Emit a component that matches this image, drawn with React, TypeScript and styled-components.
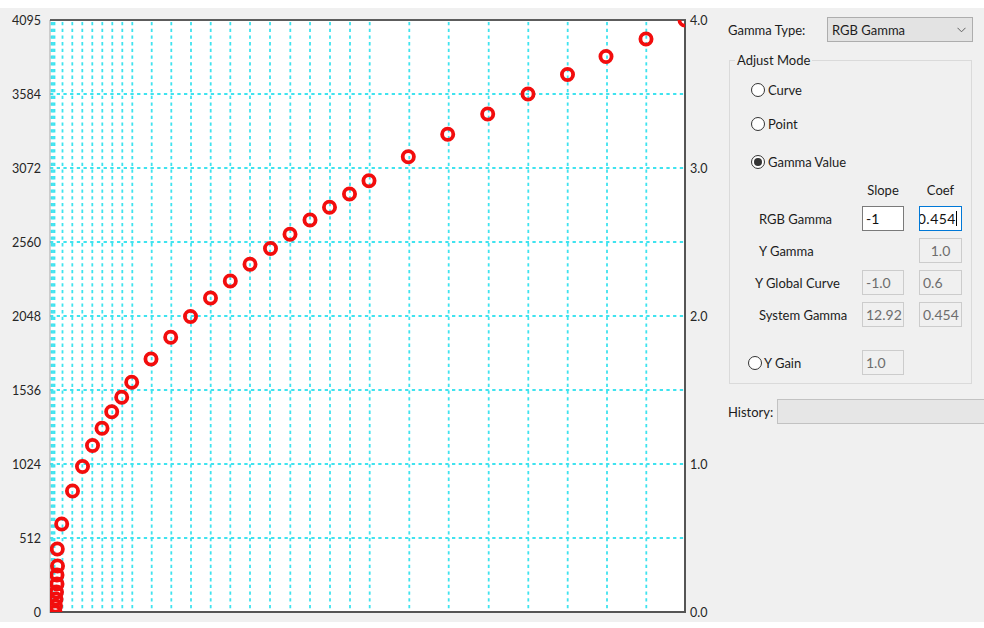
import React from "react";
import styled, { createGlobalStyle, css } from "styled-components";

const GlobalStyle = createGlobalStyle`
  html, body { margin: 0; padding: 0; background: #ffffff; }
  body {
    font-family: "Lato", "Open Sans", sans-serif;
    font-size: 13px;
    color: #1c1c1c;
  }
`;

/* ---------- window ---------- */

const Window = styled.div`
  margin-top: 8px;
  width: 984px;
  height: 614px;
  background: #f0f0f0;
  display: flex;
  overflow: hidden;
`;

const Chart = styled.svg`
  flex: 0 0 720px;
  height: 614px;
  display: block;
`;

const Side = styled.div`
  flex: 1;
  min-width: 0;
  padding: 9px 0 0 8px;
  display: flex;
  flex-direction: column;
`;

/* ---------- gamma type ---------- */

const TypeRow = styled.div`
  display: flex;
  align-items: center;
  height: 25px;
`;

const TypeLabel = styled.span`
  flex: 0 0 99px;
`;

const Combo = styled.div`
  box-sizing: border-box;
  flex: 0 0 146px;
  height: 25px;
  border: 1px solid #adadad;
  background: #e3e3e3;
  display: flex;
  align-items: center;
  justify-content: space-between;
  padding: 0 6px 0 4px;
`;

/* ---------- group box ---------- */

const Group = styled.fieldset`
  box-sizing: border-box;
  margin: 10px 0 0 1px;
  padding: 0 0 8px 0;
  width: 243px;
  min-width: 0;
  border: 1px solid #dadada;
  display: flex;
  flex-direction: column;
`;

const Legend = styled.legend`
  margin-left: 5px;
  padding: 0 2px;
  line-height: 16px;
`;

const RadioRow = styled.div<{ $top: number; $indent: number }>`
  display: flex;
  align-items: center;
  gap: 3px;
  height: 20px;
  margin-top: ${(p) => p.$top}px;
  margin-left: ${(p) => p.$indent}px;
`;

const RadioMark = styled.span<{ $on?: boolean }>`
  box-sizing: border-box;
  width: 14px;
  height: 14px;
  border-radius: 50%;
  border: 1px solid #333333;
  background: #ffffff;
  display: flex;
  align-items: center;
  justify-content: center;
  flex: 0 0 auto;
  &::after {
    content: "";
    width: 8px;
    height: 8px;
    border-radius: 50%;
    background: #333333;
    display: ${(p) => (p.$on ? "block" : "none")};
  }
`;

const Table = styled.div`
  display: grid;
  grid-template-columns: 88px 42px 43px;
  grid-template-rows: 18px repeat(4, 25px);
  column-gap: 15px;
  row-gap: 7px;
  margin: 9px 0 0 29px;
`;

const HeadCell = styled.span`
  text-align: center;
  line-height: 18px;
`;

const RowLabel = styled.span<{ $shift?: number }>`
  display: flex;
  align-items: center;
  white-space: nowrap;
  margin-left: ${(p) => p.$shift ?? 0}px;
`;

type FieldKind = "normal" | "focus" | "disabled";

const Field = styled.div<{ $kind: FieldKind; $align?: "left" | "center" }>`
  box-sizing: border-box;
  height: 25px;
  border: 1px solid #7a7a7a;
  background: #ffffff;
  padding: 0 3px;
  display: flex;
  align-items: center;
  justify-content: ${(p) => (p.$align === "center" ? "center" : "flex-start")};
  overflow: hidden;
  white-space: nowrap;
  font-size: 14px;
  color: #111111;
  ${(p) =>
    p.$kind === "disabled" &&
    css`
      border-color: #cccccc;
      background: #f0f0f0;
      color: #6d6d6d;
    `}
  ${(p) =>
    p.$kind === "focus" &&
    css`
      border-color: #0078d7;
      justify-content: flex-end;
      padding-right: 4px;
      letter-spacing: 0.5px;
    `}
`;

const Caret = styled.span`
  display: inline-block;
  flex: 0 0 1px;
  height: 15px;
  background: #000000;
`;

const GainRow = styled.div`
  display: flex;
  align-items: center;
  margin: 23px 0 0 18px;
  height: 25px;
`;

const GainChoice = styled.div`
  display: flex;
  align-items: center;
  gap: 2px;
  flex: 0 0 114px;
`;

const GainField = styled(Field)`
  flex: 0 0 42px;
`;

/* ---------- history ---------- */

const HistoryRow = styled.div`
  display: flex;
  align-items: center;
  margin-top: 15px;
  height: 25px;
`;

const HistoryLabel = styled.span`
  flex: 0 0 49px;
`;

const HistoryBox = styled.div`
  box-sizing: border-box;
  flex: 0 0 230px;
  height: 25px;
  border: 1px solid #c2c2c2;
  background: #e6e6e6;
`;

/* ---------- chart data ---------- */

const PLOT = { left: 50, top: 20, right: 685, bottom: 612 };

const gridX = [
  51.5, 53, 54.5, 62.5, 72.3, 82.3, 92.3, 102.3, 112.3, 122.3, 132.3, 151.7,
  171.3, 191, 210.7, 230.3, 250, 270, 290.3, 310, 330, 350, 369.7, 409.3,
  448.7, 488.7, 528.3, 567.7, 607, 646.3,
];

const gridY = [94, 168, 242, 316, 390, 464, 538];

const leftTicks: [string, number][] = [
  ["4095", 20],
  ["3584", 94],
  ["3072", 168],
  ["2560", 242],
  ["2048", 316],
  ["1536", 390],
  ["1024", 464],
  ["512", 538],
  ["0", 612],
];

const rightTicks: [string, number][] = [
  ["4.0", 20],
  ["3.0", 168],
  ["2.0", 316],
  ["1.0", 464],
  ["0.0", 612],
];

const points: [number, number][] = [
  [55, 612], [55.5, 606], [56, 599], [56.5, 592], [57, 584], [57, 575],
  [57.5, 566], [57.3, 549], [61.7, 524], [72.5, 491], [82.5, 466.5],
  [92.5, 445.5], [102, 428.3], [111.7, 411.7], [121.7, 397.3], [131.7, 382.3],
  [151, 359], [170.7, 337.3], [190.5, 316.5], [210.5, 298], [230.3, 281],
  [250, 264.3], [270.5, 248.5], [290, 234.3], [310, 220], [329.5, 207.3],
  [349.5, 194], [369, 180.7], [408.3, 156.7], [447.7, 134.3], [487.7, 114],
  [528, 94], [567.5, 74.5], [606, 56.5], [646, 39], [685, 20],
];

const GammaChart: React.FC = () => (
  <Chart viewBox="0 8 720 614" xmlns="http://www.w3.org/2000/svg">
    <defs>
      <clipPath id="plotClip">
        <rect
          x={PLOT.left}
          y={PLOT.top}
          width={PLOT.right - PLOT.left}
          height={PLOT.bottom - PLOT.top}
        />
      </clipPath>
    </defs>
    <rect
      x={PLOT.left}
      y={PLOT.top}
      width={PLOT.right - PLOT.left}
      height={PLOT.bottom - PLOT.top}
      fill="#ffffff"
    />
    <g stroke="#3fe3ef" strokeWidth={1.8} strokeDasharray="3.3 3.4" clipPath="url(#plotClip)">
      {gridX.map((x) => (
        <line key={`v${x}`} x1={x} y1={PLOT.top + 2} x2={x} y2={PLOT.bottom} />
      ))}
      {gridY.map((y) => (
        <line key={`h${y}`} x1={PLOT.left} y1={y} x2={PLOT.right} y2={y} />
      ))}
    </g>
    <line x1={PLOT.left} y1={PLOT.top} x2={PLOT.left} y2={PLOT.bottom + 1} stroke="#a9a9a9" strokeWidth={1} />
    <line x1={PLOT.left} y1={PLOT.top} x2={PLOT.right + 1} y2={PLOT.top} stroke="#5c5c5c" strokeWidth={2} />
    <line x1={PLOT.right} y1={PLOT.top} x2={PLOT.right} y2={PLOT.bottom + 1} stroke="#555555" strokeWidth={2} />
    <line x1={PLOT.left} y1={PLOT.bottom} x2={PLOT.right + 1} y2={PLOT.bottom} stroke="#555555" strokeWidth={2} />
    <g fill="none" stroke="#f20d0d" strokeWidth={3.8} clipPath="url(#plotClip)">
      {points.map(([x, y], i) => (
        <circle key={i} cx={x} cy={y} r={5.6} />
      ))}
    </g>
    <g fontFamily="Lato, 'Open Sans', sans-serif" fontSize={12.5} fill="#262626">
      {leftTicks.map(([t, y]) => (
        <text key={t} x={41} y={y} textAnchor="end" dominantBaseline="central">
          {t}
        </text>
      ))}
      {rightTicks.map(([t, y]) => (
        <text key={t} x={690} y={y} dominantBaseline="central">
          {t}
        </text>
      ))}
    </g>
  </Chart>
);

/* ---------- page ---------- */

const Chevron = () => (
  <svg width="9" height="6" viewBox="0 0 9 6">
    <polyline points="0.5,0.8 4.5,4.8 8.5,0.8" fill="none" stroke="#606060" strokeWidth="1" />
  </svg>
);

const App: React.FC = () => (
  <>
    <GlobalStyle />
    <Window>
      <GammaChart />
      <Side>
        <TypeRow>
          <TypeLabel>Gamma Type:</TypeLabel>
          <Combo>
            <span>RGB Gamma</span>
            <Chevron />
          </Combo>
        </TypeRow>

        <Group>
          <Legend>Adjust Mode</Legend>
          <RadioRow $top={12} $indent={21}>
            <RadioMark />
            <span>Curve</span>
          </RadioRow>
          <RadioRow $top={14} $indent={21}>
            <RadioMark />
            <span>Point</span>
          </RadioRow>
          <RadioRow $top={18} $indent={21}>
            <RadioMark $on />
            <span>Gamma Value</span>
          </RadioRow>

          <Table>
            <span />
            <HeadCell>Slope</HeadCell>
            <HeadCell>Coef</HeadCell>

            <RowLabel>RGB Gamma</RowLabel>
            <Field $kind="normal">-1</Field>
            <Field $kind="focus">
              <span>0.454</span>
              <Caret />
            </Field>

            <RowLabel>Y Gamma</RowLabel>
            <span />
            <Field $kind="disabled" $align="center">1.0</Field>

            <RowLabel $shift={-4}>Y Global Curve</RowLabel>
            <Field $kind="disabled">-1.0</Field>
            <Field $kind="disabled">0.6</Field>

            <RowLabel>System Gamma</RowLabel>
            <Field $kind="disabled">12.92</Field>
            <Field $kind="disabled">0.454</Field>
          </Table>

          <GainRow>
            <GainChoice>
              <RadioMark />
              <span>Y Gain</span>
            </GainChoice>
            <GainField $kind="disabled">1.0</GainField>
          </GainRow>
        </Group>

        <HistoryRow>
          <HistoryLabel>History:</HistoryLabel>
          <HistoryBox />
        </HistoryRow>
      </Side>
    </Window>
  </>
);

export default App;
